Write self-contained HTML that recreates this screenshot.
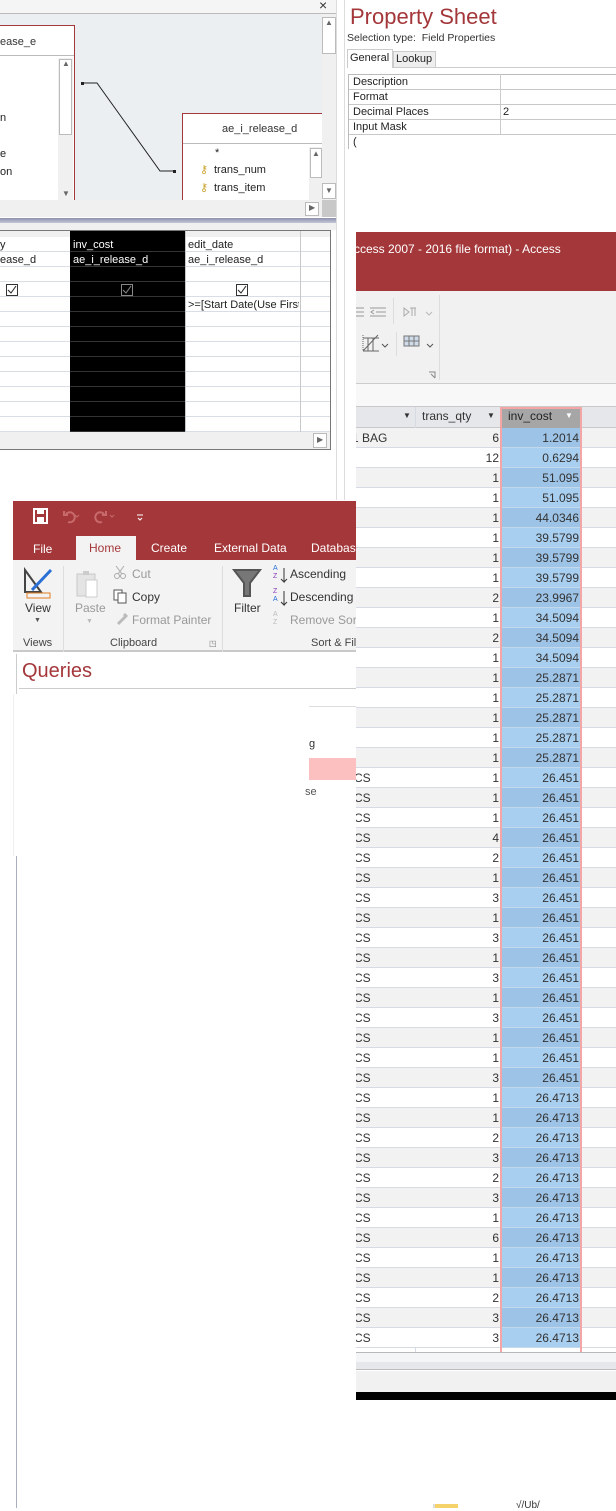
<!DOCTYPE html>
<html><head><meta charset="utf-8"><style>
*{margin:0;padding:0;box-sizing:border-box}
body{width:616px;height:1508px;position:relative;background:#fff;overflow:hidden;font-family:"Liberation Sans",sans-serif;font-size:11px;color:#222}
.a{position:absolute}
.t{position:absolute;white-space:nowrap}
</style></head><body>

<!-- ===== query design panel ===== -->
<div class="a" style="left:0;top:0;width:337px;height:14px;background:#f5f5f5;border-bottom:1px solid #bbb"></div>
<div class="t" style="left:319px;top:-3px;font-size:14px;color:#333">×</div>
<div class="a" style="left:0;top:14px;width:322px;height:186px;background:#eceff2"></div>
<div class="a" style="left:0;top:25px;width:75px;height:175px;background:#fff;border:1px solid #a4373a;border-left:none;border-bottom:none"></div>
<div class="a" style="left:0;top:55px;width:74px;height:1px;background:#bbb"></div>
<div class="t" style="left:0;top:36px;font-size:11px;color:#333">ease_e</div>
<div class="a" style="left:58px;top:58px;width:15px;height:142px;background:#f0f0f0"></div>
<div class="a" style="left:59px;top:59px;width:13px;height:76px;background:#fff;border:1px solid #bbb"></div>
<div class="t" style="left:62px;top:59px;font-size:8px;color:#666">▲</div>
<div class="t" style="left:62px;top:189px;font-size:8px;color:#666">▼</div>
<div class="t" style="left:0;top:112px;font-size:11px">n</div>
<div class="t" style="left:0;top:148px;font-size:11px">e</div>
<div class="t" style="left:0;top:166px;font-size:11px">on</div>
<svg class="a" style="left:0;top:0" width="337" height="200"><path d="M82 83H97L160 171H175" stroke="#222" fill="none" stroke-width="1"/><rect x="81" y="82" width="3" height="3" fill="#222"/><rect x="173" y="170" width="3" height="3" fill="#222"/></svg>
<div class="a" style="left:182px;top:113px;width:140px;height:87px;background:#fff;border:1px solid #a4373a;border-right:none;border-bottom:none"></div>
<div class="a" style="left:183px;top:143px;width:139px;height:1px;background:#bbb"></div>
<div class="t" style="left:222px;top:123px;font-size:11px;color:#333">ae_i_release_d</div>
<div class="t" style="left:215px;top:147px;font-size:11px">*</div>
<div class="t" style="left:200px;top:163px;font-size:11px;color:#c9a22a">⚷</div>
<div class="t" style="left:214px;top:164px;font-size:11px">trans_num</div>
<div class="t" style="left:200px;top:181px;font-size:11px;color:#c9a22a">⚷</div>
<div class="t" style="left:214px;top:182px;font-size:11px">trans_item</div>
<div class="a" style="left:309px;top:147px;width:13px;height:53px;background:#f0f0f0"></div>
<div class="a" style="left:310px;top:148px;width:12px;height:30px;background:#fff;border:1px solid #bbb"></div>
<div class="t" style="left:312px;top:149px;font-size:8px;color:#666">▲</div>
<div class="a" style="left:322px;top:14px;width:15px;height:203px;background:#f0f0f0"></div>
<div class="a" style="left:322px;top:17px;width:14px;height:37px;background:#fff;border:1px solid #bbb"></div>
<div class="t" style="left:325px;top:18px;font-size:8px;color:#666">▲</div>
<div class="a" style="left:322px;top:183px;width:14px;height:16px;background:#fff;border:1px solid #bbb"></div>
<div class="t" style="left:325px;top:186px;font-size:8px;color:#666">▼</div>
<div class="a" style="left:0;top:200px;width:322px;height:17px;background:#f0f0f0"></div>
<div class="a" style="left:305px;top:202px;width:14px;height:14px;background:#fff;border:1px solid #bbb"></div>
<div class="t" style="left:309px;top:203px;font-size:8px;color:#666">▶</div>
<div class="a" style="left:322px;top:200px;width:15px;height:17px;background:#c8c8c8"></div>
<div class="a" style="left:0;top:218px;width:337px;height:5px;background:linear-gradient(#8e90ac,#c4c6d6)"></div>
<div class="a" style="left:0;top:223px;width:337px;height:7px;background:#f0f0f0"></div>
<div class="a" style="left:0;top:230px;width:331px;height:220px;background:#fff;border:1px solid #777;border-left:none"></div>
<div class="a" style="left:0;top:231px;width:330px;height:6px;background:#f0f0f0"></div>
<div class="a" style="left:0;top:237px;width:330px;height:195px;background:repeating-linear-gradient(#fff 0 14px,#d9dde6 14px 15px)"></div>
<div class="a" style="left:70px;top:231px;width:115px;height:201px;background:#000"></div>
<div class="a" style="left:70px;top:237px;width:115px;height:195px;background:repeating-linear-gradient(#000 0 14px,#333 14px 15px)"></div>
<div class="a" style="left:185px;top:231px;width:1px;height:201px;background:#c8c8c8"></div>
<div class="a" style="left:300px;top:231px;width:1px;height:201px;background:#c8c8c8"></div>
<div class="t" style="left:0;top:239px">y</div>
<div class="t" style="left:0;top:254px">ease_d</div>
<div class="t" style="left:73px;top:239px;color:#fff">inv_cost</div>
<div class="t" style="left:73px;top:254px;color:#fff">ae_i_release_d</div>
<div class="t" style="left:188px;top:239px">edit_date</div>
<div class="t" style="left:188px;top:254px">ae_i_release_d</div>
<div class="a" style="left:6px;top:284px;width:12px;height:12px;border:1px solid #333;background:#fff"></div>
<div class="a" style="left:121px;top:284px;width:12px;height:12px;border:1px solid #888;background:#000"></div>
<div class="a" style="left:236px;top:284px;width:12px;height:12px;border:1px solid #333;background:#fff"></div>
<svg class="a" style="left:0;top:284px" width="250" height="12"><path d="M8 6l3 3 5-7M123 6l3 3 5-7M238 6l3 3 5-7" stroke="#888" fill="none"/><path d="M8 6l3 3 5-7M238 6l3 3 5-7" stroke="#333" fill="none"/></svg>
<div class="t" style="left:188px;top:299px;width:111px;overflow:hidden">&gt;=[Start Date(Use First</div>
<div class="a" style="left:0;top:432px;width:330px;height:17px;background:#f0f0f0"></div>
<div class="a" style="left:313px;top:433px;width:14px;height:15px;background:#fff;border:1px solid #bbb"></div>
<div class="t" style="left:317px;top:435px;font-size:8px;color:#666">▶</div>
<div class="a" style="left:336px;top:0;width:1px;height:500px;background:#ddd"></div>
<div class="a" style="left:344px;top:0;width:1px;height:500px;background:#ddd"></div>

<!-- ===== property sheet ===== -->
<div class="t" style="left:350px;top:4px;font-size:22px;color:#a4373a">Property Sheet</div>
<div class="t" style="left:347px;top:32px;font-size:10.5px;color:#333">Selection type:&nbsp; Field Properties</div>
<div class="a" style="left:347px;top:67px;width:269px;height:1px;background:#ccc"></div>
<div class="a" style="left:347px;top:49px;width:46px;height:19px;background:#fff;border:1px solid #ccc;border-bottom:none"></div>
<div class="t" style="left:350px;top:52px">General</div>
<div class="a" style="left:393px;top:51px;width:43px;height:17px;background:#eee;border:1px solid #ccc"></div>
<div class="t" style="left:396px;top:53px">Lookup</div>
<div class="a" style="left:348px;top:74px;width:268px;height:61px;border-top:1px solid #bbb;border-left:1px solid #bbb;background:repeating-linear-gradient(#fff 0 14px,#c8c8c8 14px 15px)"></div>
<div class="a" style="left:500px;top:74px;width:1px;height:60px;background:#ccc"></div>
<div class="t" style="left:353px;top:76px">Description</div>
<div class="t" style="left:353px;top:91px">Format</div>
<div class="t" style="left:353px;top:106px">Decimal Places</div>
<div class="t" style="left:503px;top:106px">2</div>
<div class="t" style="left:353px;top:121px">Input Mask</div>
<div class="a" style="left:348px;top:135px;width:7px;height:14px;border-left:1px solid #bbb"></div>
<div class="t" style="left:353px;top:136px">(</div>

<!-- ===== access main window ===== -->
<div class="a" style="left:356px;top:232px;width:260px;height:59px;background:#a4373a"></div>
<div class="t" style="left:354px;top:242px;font-size:12px;color:#fff">ccess 2007 - 2016 file format) - Access</div>
<div class="a" style="left:356px;top:291px;width:260px;height:92px;background:#f1f1f1"></div>
<div class="a" style="left:356px;top:383px;width:260px;height:1px;background:#ccc"></div>
<div class="a" style="left:356px;top:384px;width:260px;height:23px;background:#f8f8f8"></div>
<div class="a" style="left:393px;top:298px;width:1px;height:26px;background:#ddd"></div>
<div class="a" style="left:396px;top:332px;width:1px;height:24px;background:#ddd"></div>
<div class="a" style="left:439px;top:295px;width:1px;height:85px;background:#ddd"></div>
<svg class="a" style="left:356px;top:300px" width="90" height="80" fill="none" stroke="#999"><path d="M0 8h8M0 12h8M0 16h8M14 8h16M20 12h10M14 16h16M18 10l-3 2 3 2"/><path d="M48 8v8l5-4zM54 8h6M56 8v8M59 8v8" stroke="#aaa"/><path d="M70 12l3 3 3-3" stroke="#bbb"/><path d="M7 38h16M7 51h16M12 38v13M17 38v13M7 51L22 35" stroke="#666"/><path d="M7 35v16" stroke="#666" stroke-dasharray="1 1"/><path d="M26 44l3 3 3-3" stroke="#555"/><rect x="48" y="36" width="15" height="10" stroke="#777" fill="#cfdbe8"/><path d="M48 41h15M53 36v10M58 36v10" stroke="#777"/><path d="M71 44l3 3 3-3" stroke="#555"/><path d="M73 72h6v6M75 74l4 4" stroke="#888"/></svg>
<div class="a" style="left:356px;top:406px;width:260px;height:22px;background:#e6e7eb;border-top:1px solid #c9c9c9;border-bottom:1px solid #c9c9c9"></div>
<div class="a" style="left:415px;top:407px;width:1px;height:945px;background:#d5dae3"></div>
<div class="t" style="left:403px;top:411px;font-size:8px;color:#333">▼</div>
<div class="t" style="left:422px;top:409px;font-size:12px;color:#333">trans_qty</div>
<div class="t" style="left:487px;top:411px;font-size:8px;color:#333">▼</div>
<div class="a" style="left:500px;top:407px;width:82px;height:21px;background:#a6a6a6;border:2px solid #f4a6a6;border-bottom:none"></div>
<div class="t" style="left:508px;top:409px;font-size:12px;color:#222">inv_cost</div>
<div class="t" style="left:565px;top:411px;font-size:8px;color:#fff">▼</div>
<div id="rows" class="a" style="left:356px;top:0;width:260px;height:1508px;overflow:hidden"></div>
<div class="a" style="left:500px;top:428px;width:2px;height:924px;background:#f4a6a6"></div>
<div class="a" style="left:580px;top:428px;width:2px;height:924px;background:#f4a6a6"></div>
<div class="a" style="left:356px;top:1352px;width:260px;height:1px;background:#b9b9b9"></div>
<div class="a" style="left:356px;top:1353px;width:260px;height:9px;background:#f4f5f7"></div>
<div class="a" style="left:356px;top:1362px;width:260px;height:8px;background:#e6e7ea;border-bottom:1px solid #bbb"></div>
<div class="a" style="left:356px;top:1371px;width:260px;height:21px;background:#f1f1f1"></div>
<div class="a" style="left:356px;top:1392px;width:260px;height:8px;background:#000"></div>
<div class="a" style="left:433px;top:1504px;width:25px;height:4px;background:#f5d36a;border-left:2px solid #ddd"></div>
<div class="t" style="left:516px;top:1500px;font-size:10px;color:#333">√/Ub/</div>

<!-- ===== ribbon window ===== -->
<div class="a" style="left:13px;top:501px;width:343px;height:59px;background:#a4373a"></div>
<svg class="a" style="left:30px;top:506px" width="120" height="20"><rect x="4" y="3" width="13" height="14" fill="none" stroke="#fff" stroke-width="2"/><rect x="7" y="4" width="7" height="4" fill="#fff"/><rect x="7" y="11" width="7" height="5" fill="#fff"/><path d="M36 8a5 5 0 1 1 2 8M34 5v4h4" stroke="#c86a6c" fill="none" stroke-width="2"/><path d="M45 9l2 2 2-2M80 9l2 2 2-2" stroke="#c86a6c" fill="none"/><path d="M74 8a5 5 0 1 0-2 8M76 5v4h-4" stroke="#c86a6c" fill="none" stroke-width="2"/><path d="M107 9h6M108 12l2 2 2-2" stroke="#fff" fill="none"/></svg>
<div class="a" style="left:76px;top:536px;width:60px;height:24px;background:#f3f3f3"></div>
<div class="t" style="left:33px;top:542px;font-size:12px;color:#fff">File</div>
<div class="t" style="left:89px;top:541px;font-size:12px;color:#a4373a">Home</div>
<div class="t" style="left:151px;top:541px;font-size:12px;color:#fff">Create</div>
<div class="t" style="left:214px;top:541px;font-size:12px;color:#fff">External Data</div>
<div class="t" style="left:311px;top:541px;width:45px;overflow:hidden;font-size:12px;color:#fff">Database</div>
<div class="a" style="left:13px;top:560px;width:343px;height:92px;background:#f3f3f3;border-bottom:2px solid #c9c9c9"></div>
<div class="a" style="left:63px;top:566px;width:1px;height:86px;background:#ddd"></div>
<div class="a" style="left:222px;top:566px;width:1px;height:86px;background:#ddd"></div>
<svg class="a" style="left:20px;top:564px" width="340" height="74" fill="none">
<path d="M5 6v22h16z" stroke="#444" stroke-width="2"/><path d="M12 26L31 6" stroke="#2a6fd6" stroke-width="3"/><rect x="7" y="29" width="23" height="5" stroke="#e07b20"/>
<rect x="57" y="10" width="18" height="22" fill="#e4e4e4" stroke="#c8c8c8"/><rect x="66" y="16" width="11" height="17" fill="#fff" stroke="#ccc"/><rect x="63" y="7" width="6" height="4" fill="#ccc"/>
<circle cx="97" cy="12" r="2.5" stroke="#aaa"/><circle cx="103" cy="12" r="2.5" stroke="#aaa"/><path d="M96 2l6 8M104 2l-6 8" stroke="#aaa"/>
<rect x="94" y="26" width="8" height="10" stroke="#555" fill="#fff"/><rect x="98" y="29" width="8" height="10" stroke="#555" fill="#fff"/>
<path d="M98 60l8-8M104 50l3 3" stroke="#bbb" stroke-width="3"/>
<path d="M214 6h26l-10 13v13h-6V19z" stroke="#555" stroke-width="2" fill="#777"/>
<path d="M264 4v14l-3-3M264 18l3-3" stroke="#333"/><path d="M264 27v14l-3-3M264 41l3-3" stroke="#333"/>
</svg>
<div class="t" style="left:273px;top:565px;font-size:7px;color:#2a6fd6;line-height:8px">A<br><span style="color:#8a3ab9">Z</span></div>
<div class="t" style="left:273px;top:588px;font-size:7px;color:#8a3ab9;line-height:8px">Z<br><span style="color:#2a6fd6">A</span></div>
<div class="t" style="left:273px;top:611px;font-size:7px;color:#bbb;line-height:8px">A<br>Z</div>
<div class="t" style="left:25px;top:601px;font-size:12px;color:#333">View</div>
<div class="t" style="left:34px;top:617px;font-size:7px;color:#555">▼</div>
<div class="t" style="left:75px;top:601px;font-size:12px;color:#999">Paste</div>
<div class="t" style="left:86px;top:618px;font-size:7px;color:#bbb">▼</div>
<div class="t" style="left:132px;top:567px;font-size:12px;color:#999">Cut</div>
<div class="t" style="left:132px;top:590px;font-size:12px;color:#333">Copy</div>
<div class="t" style="left:132px;top:613px;font-size:12px;color:#999">Format Painter</div>
<div class="t" style="left:234px;top:601px;font-size:12px;color:#333">Filter</div>
<div class="t" style="left:290px;top:567px;font-size:12px;color:#333">Ascending</div>
<div class="t" style="left:290px;top:590px;font-size:12px;color:#333">Descending</div>
<div class="t" style="left:290px;top:613px;width:66px;overflow:hidden;font-size:12px;color:#999">Remove Sort</div>
<div class="t" style="left:23px;top:637px;font-size:11px;color:#444">Views</div>
<div class="t" style="left:110px;top:637px;font-size:11px;color:#444">Clipboard</div>
<div class="t" style="left:209px;top:639px;font-size:8px;color:#777">◳</div>
<div class="t" style="left:311px;top:637px;width:45px;overflow:hidden;font-size:11px;color:#444">Sort &amp; Filter</div>
<div class="a" style="left:16px;top:654px;width:340px;height:40px;background:#fff;border-left:1px solid #ccc"></div>
<div class="t" style="left:22px;top:660px;font-size:20px;color:#a4373a">Queries</div>
<div class="a" style="left:19px;top:688px;width:337px;height:1px;background:#ccc"></div>
<div class="a" style="left:309px;top:706px;width:47px;height:1px;background:#ddd"></div>
<div class="t" style="left:309px;top:738px;font-size:11px;color:#333">g</div>
<div class="a" style="left:309px;top:758px;width:47px;height:22px;background:#fcc0c0"></div>
<div class="t" style="left:305px;top:786px;font-size:11px;color:#555">se</div>
<div class="a" style="left:13px;top:694px;width:1px;height:162px;background:#f0f0f0"></div>
<div class="a" style="left:16px;top:856px;width:1px;height:652px;background:#a9afbd"></div>

<script>
var q=[6,12,1,1,1,1,1,1,2,1,2,1,1,1,1,1,1,1,1,1,4,2,1,3,1,3,1,3,1,3,1,1,3,1,1,2,3,2,3,1,6,1,1,2,3,3];
var v=["1.2014","0.6294","51.095","51.095","44.0346","39.5799","39.5799","39.5799","23.9967","34.5094","34.5094","34.5094"];
for(var i=0;i<5;i++)v.push("25.2871");for(i=0;i<16;i++)v.push("26.451");for(i=0;i<13;i++)v.push("26.4713");
var h="";
for(i=0;i<46;i++){var y=428+i*20;var bg=i%2?"#fff":"#f2f2f2";var bb=i%2?"#a9cff0":"#9dc3e6";
h+='<div class="a" style="left:0;top:'+y+'px;width:260px;height:20px;background:'+bg+';border-bottom:1px solid #d5dae3"></div>';
h+='<div class="a" style="left:146px;top:'+y+'px;width:78px;height:20px;background:'+bb+';border-bottom:1px solid #c4d8ec"></div>';
var l=i==0?"1 BAG":(i>=17?"CS":"");
if(l)h+='<div class="t" style="left:'+(i==0?-4:-2)+'px;top:'+(y+3)+'px;font-size:12px;color:#333">'+l+'</div>';
h+='<div class="t" style="left:60px;width:83px;text-align:right;top:'+(y+3)+'px;font-size:12px;color:#333">'+q[i]+'</div>';
h+='<div class="t" style="left:146px;width:77px;text-align:right;top:'+(y+3)+'px;font-size:12px;color:#333">'+v[i]+'</div>';}
document.getElementById("rows").innerHTML=h;
</script>
</body></html>
